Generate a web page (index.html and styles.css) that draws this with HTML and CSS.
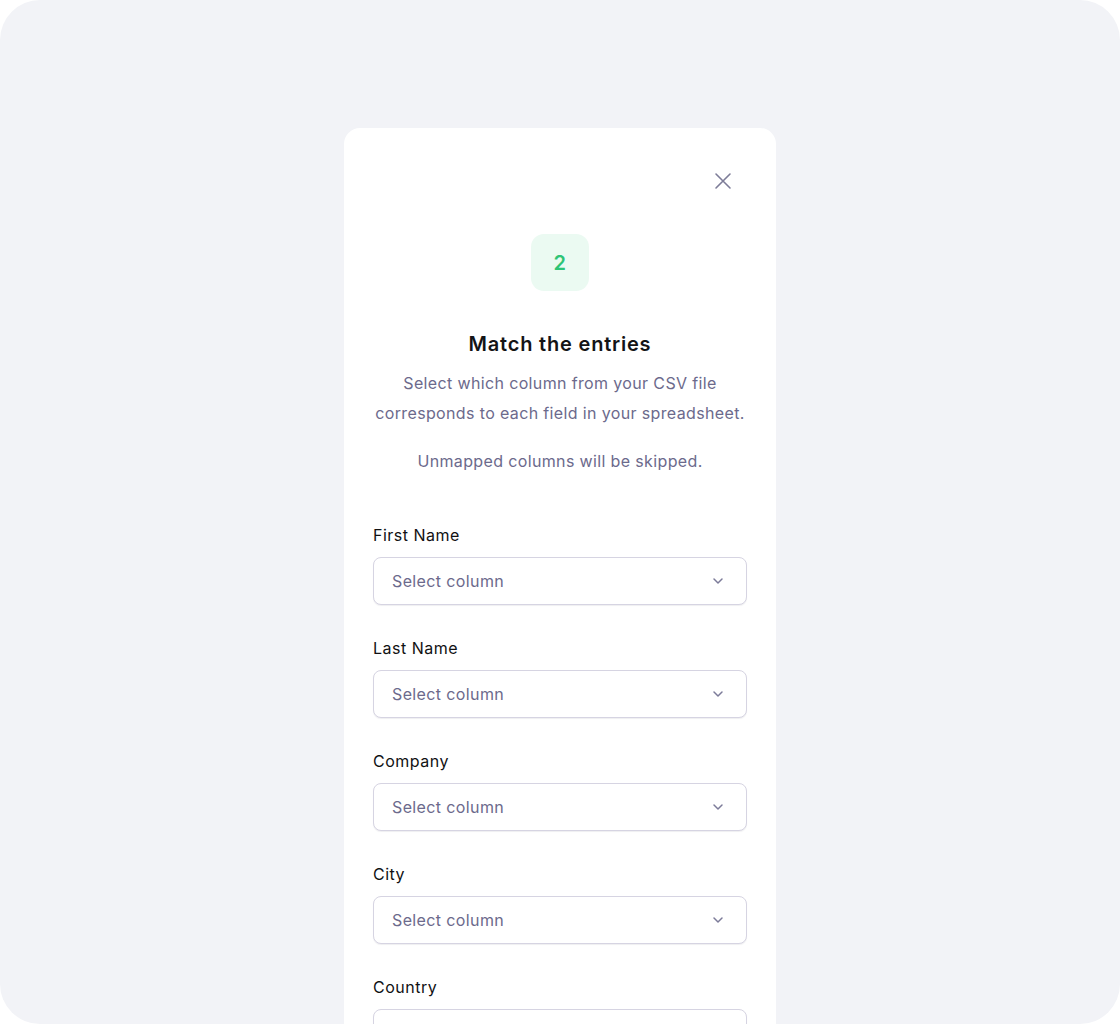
FILE: index.html
```html
<!DOCTYPE html>
<html lang="en">
<head>
<meta charset="utf-8">
<title>Match the entries</title>
<link rel="stylesheet" href="styles.css">
</head>
<body>
<div class="frame">
  <div class="modal">
    <div class="modal-head">
      <button class="close" aria-label="Close">
        <svg width="24" height="24" viewBox="0 0 24 24" fill="none" stroke="#7d7c98" stroke-width="1.6" stroke-linecap="round"><path d="M5 5L19 19M19 5L5 19"/></svg>
      </button>
    </div>
    <div class="step">2</div>
    <h1 class="title">Match the entries</h1>
    <p class="desc">Select which column from your CSV file corresponds to each field in your spreadsheet.</p>
    <p class="desc note">Unmapped columns will be skipped.</p>

    <div class="fields">
      <div class="field">
        <label class="label">First Name</label>
        <div class="select"><span>Select column</span><svg class="chev" width="12" height="8" viewBox="0 0 12 8" fill="none" stroke="#7c7b99" stroke-width="1.5" stroke-linecap="round" stroke-linejoin="round"><path d="M2 2L6 6L10 2"/></svg></div>
      </div>
      <div class="field">
        <label class="label">Last Name</label>
        <div class="select"><span>Select column</span><svg class="chev" width="12" height="8" viewBox="0 0 12 8" fill="none" stroke="#7c7b99" stroke-width="1.5" stroke-linecap="round" stroke-linejoin="round"><path d="M2 2L6 6L10 2"/></svg></div>
      </div>
      <div class="field">
        <label class="label">Company</label>
        <div class="select"><span>Select column</span><svg class="chev" width="12" height="8" viewBox="0 0 12 8" fill="none" stroke="#7c7b99" stroke-width="1.5" stroke-linecap="round" stroke-linejoin="round"><path d="M2 2L6 6L10 2"/></svg></div>
      </div>
      <div class="field">
        <label class="label">City</label>
        <div class="select"><span>Select column</span><svg class="chev" width="12" height="8" viewBox="0 0 12 8" fill="none" stroke="#7c7b99" stroke-width="1.5" stroke-linecap="round" stroke-linejoin="round"><path d="M2 2L6 6L10 2"/></svg></div>
      </div>
      <div class="field">
        <label class="label">Country</label>
        <div class="select select-last"><svg class="chev" width="12" height="8" viewBox="0 0 12 8" fill="none" stroke="#7c7b99" stroke-width="1.5" stroke-linecap="round" stroke-linejoin="round"><path d="M2 2L6 6L10 2"/></svg></div>
      </div>
    </div>
  </div>
</div>
</body>
</html>
```
FILE: styles.css
```css
* { box-sizing: border-box; }
html, body {
  margin: 0;
  padding: 0;
  background: #ffffff;
}
body {
  font-family: Inter, "Noto Sans", "Liberation Sans", sans-serif;
  -webkit-font-smoothing: antialiased;
}
.frame {
  width: 1120px;
  height: 1024px;
  background: #f2f3f7;
  border-radius: 40px;
  overflow: hidden;
  display: flex;
  justify-content: center;
  padding-top: 128px;
}
.modal {
  width: 432px;
  background: #ffffff;
  border-radius: 16px 16px 0 0;
  padding: 28px 28px 40px;
  display: flex;
  flex-direction: column;
  align-items: center;
  align-self: flex-start;
}
.modal-head {
  width: 100%;
  height: 50px;
  display: flex;
  justify-content: flex-end;
  align-items: center;
  padding-right: 13px;
}
.close {
  width: 24px;
  height: 24px;
  padding: 0;
  border: 0;
  background: transparent;
  display: flex;
  align-items: center;
  justify-content: center;
  cursor: pointer;
}
.step {
  margin-top: 28px;
  width: 58px;
  height: 57px;
  border-radius: 13px;
  background: #ebfaf2;
  color: #2ec476;
  font-size: 20px;
  font-weight: 600;
  letter-spacing: 0.4px;
  display: flex;
  align-items: center;
  justify-content: center;
}
.title {
  margin: 39px 0 0;
  font-size: 20px;
  line-height: 28px;
  font-weight: 600;
  letter-spacing: 0.8px;
  color: #141416;
  text-align: center;
}
.desc {
  margin: 10px 0 0;
  font-size: 16px;
  line-height: 30px;
  letter-spacing: 0.36px;
  color: #6c6a8c;
  text-align: center;
}
.desc.note {
  margin-top: 18px;
}
.fields {
  width: 100%;
  margin-top: 47px;
  display: flex;
  flex-direction: column;
  gap: 31px;
  padding: 0 1px;
}
.field {
  display: flex;
  flex-direction: column;
}
.label {
  font-size: 16px;
  line-height: 24px;
  font-weight: 400;
  letter-spacing: 0.5px;
  color: #111113;
  margin-bottom: 10px;
}
.select {
  height: 48px;
  border: 1px solid #d6d4e2;
  border-radius: 8px;
  display: flex;
  align-items: center;
  justify-content: space-between;
  padding: 0 22px 0 18px;
  font-size: 16px;
  letter-spacing: 0.38px;
  color: #6c6a8c;
  background: #fff;
  box-shadow: 0 1px 1px rgba(30, 30, 60, 0.07);
}
.select-last {
  justify-content: flex-end;
}
.chev {
  display: block;
}
```
